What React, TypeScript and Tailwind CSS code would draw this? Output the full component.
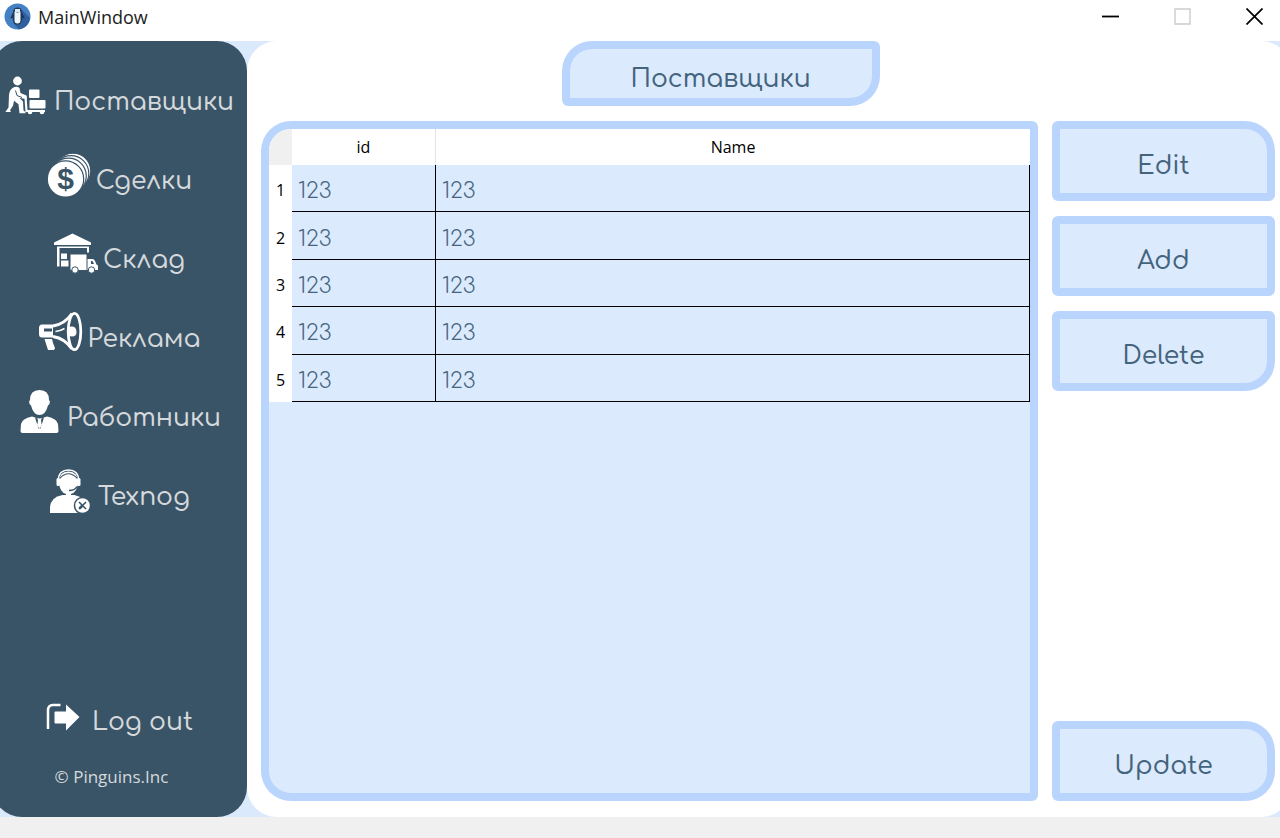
import type { ReactNode } from "react";

function PenguinLogo() {
  return (
    <svg className="size-[27px] shrink-0" viewBox="0 0 27 27" aria-hidden="true">
      <circle cx="13.500" cy="13.500" r="13" fill="#4480c4" />
      <path d="M17 6 L26 15 A13 13 0 0 1 15 26.4 L9 20 Z" fill="#2f5f9c" />
      <path d="M13.500 4.500c-3 0-4.400 2-4.400 4.500l-3 6.500 2.600-.6c0 4 1.500 6.600 4.800 6.600s4.800-2.600 4.800-6.600l2.600.6-3-6.500c0-2.500-1.400-4.500-4.400-4.500z" fill="#1d3a5c" />
      <path d="M10.500 8.500l3 1.500 3-1.500v9c0 2-1 3-3 3s-3-1-3-3z" fill="#eef6fb" />
      <path d="M11 6h5v3.500h-5z" fill="#dceaf2" />
    </svg>
  );
}

function Icon({ children }: { children: ReactNode }) {
  return (
    <svg className="h-11 w-11 shrink-0 text-white" viewBox="0 0 44 44" fill="currentColor" aria-hidden="true">
      {children}
    </svg>
  );
}

const DARK = "#3a5467";

function SupplierIcon() {
  return (
    <Icon>
      <g transform="translate(0 1)">
        <circle cx="12.500" cy="6" r="4.400" />
        <path d="M7.500 13q4-2.500 7 0l1 5 6 2.500v3.500l-7-1-1.500-1.500 5 5 .5 9 2 1.500v1.200h-6l-1-9-4.500-3.500-1 5-3 4.500 1 1.800H.5L0 37.500l3.500-5L4 20q.5-5 3.500-7z" />
        <path d="M10.500 15.500l1.500 5 5 2" fill="none" stroke={DARK} strokeWidth="1" />
        <path d="M17 22h3.500l1 14H40" fill="none" stroke="currentColor" strokeWidth="2.200" />
        <rect x="24" y="14.500" width="10.500" height="8.500" rx="1" />
        <rect x="24.500" y="25" width="16" height="8.500" rx="1" />
        <circle cx="25" cy="37" r="2.300" />
        <circle cx="37" cy="37" r="2.300" />
      </g>
    </Icon>
  );
}

function CoinsIcon() {
  return (
    <Icon>
      <g stroke={DARK} strokeWidth="1.200">
        <circle cx="26" cy="18" r="17.800" />
        <circle cx="24" cy="20.500" r="17.800" />
        <circle cx="21.500" cy="23" r="17.800" />
        <circle cx="18.500" cy="26" r="18.200" />
      </g>
      <text x="18.500" y="36" textAnchor="middle" fill={DARK} className="font-['Liberation_Sans'] text-[30px] font-bold">$</text>
    </Icon>
  );
}

function WarehouseIcon() {
  return (
    <Icon>
      <path d="M18.500 1.500L37 10.500v2.500H0v-2.500z" />
      <path d="M3 14.500h32v1.500H5.500v18.500H3zM33 16h2v4.500h-2z" />
      <path d="M7 21.500h6v5.500H7zM8 28.500h6.500v6H8zM7 28.500h2v6H7z" />
      <path d="M16.500 22.500H32.500v15.500H16.500z" />
      <path d="M33.500 27H38.500q1.500 0 2.500 2l1.500 3.500 1.500 1V38H33.500z" />
      <path d="M37 29h1.500l1.500 3h-3z" fill={DARK} />
      <circle cx="21" cy="38" r="3.200" stroke={DARK} />
      <circle cx="37.500" cy="38" r="3.200" stroke={DARK} />
    </Icon>
  );
}

function MegaphoneIcon() {
  return (
    <Icon>
      <path d="M3 13.500h11v13H3q-3 0-3-3.500v-6Q0 13.500 3 13.500z" />
      <path d="M5 17.500H13v3H5z" fill={DARK} />
      <path d="M14 15q12-2 19-12.500M14 25.500q12 2 19 12.500" fill="none" stroke="currentColor" strokeWidth="3" />
      <ellipse cx="35.500" cy="20.500" rx="6.300" ry="18.200" fill="none" stroke="currentColor" strokeWidth="2.800" />
      <path d="M29.500 16q7.500-2 8 4.500t-8 4.500z" />
      <path d="M16.500 20.500q5-.5 9-3" fill="none" stroke="currentColor" strokeWidth="1.500" />
      <path d="M5.500 28H13l1 4 2 5-1 2H9z" />
    </Icon>
  );
}

function WorkerIcon() {
  return (
    <Icon>
      <path d="M21.500 0q9.500 0 9.500 10 1.500 1 .5 4L30 15.500q-2.500 9.500-8.500 9.500T13 15.500L11.500 14q-1-3 .5-4 0-10 9.500-10z" />
      <path d="M14 26.500L18.500 28l3 .5 3-.5 4.500-1.500q10 2 11 7.500l.5 7q0 2-2 2H4.500q-2 0-2-2L3 34q1-5.500 11-7.500z" />
      <path d="M17 27.500l3.500 11h2l3.500-11-2.500 1-.5 2 .8 5-2.300 3-2.300-3 .8-5-.5-2z" fill={DARK} />
    </Icon>
  );
}

function SupportIcon() {
  return (
    <Icon>
      <path d="M19.500 2.500q9.500 0 9.500 10.500-.5 10-7 12v3h-5v-3q-6.500-2-7-12 0-10.500 9.500-10.500z" />
      <path d="M10.500 9.500Q19.500 0 28.500 9.500" fill="none" stroke={DARK} strokeWidth="1.200" />
      <path d="M9 11Q10 1 19.500 1T30 11" fill="none" stroke="currentColor" strokeWidth="1.500" />
      <rect x="7.500" y="9" width="3.500" height="8" rx="1.500" />
      <rect x="28" y="9" width="3.500" height="8" rx="1.500" />
      <path d="M28 17.500q-2 4-8 4" fill="none" stroke={DARK} strokeWidth="1.500" />
      <path d="M13.500 26h12q8 2 9.500 8v10H1V38q1-10 12.500-12z" />
      <circle cx="33.500" cy="36.500" r="8" stroke={DARK} strokeWidth="1.500" />
      <path d="M30 33l7 7M37 33l-7 7" stroke={DARK} strokeWidth="1.600" />
      <path d="M30.500 39.500l3-3" stroke={DARK} strokeWidth="2.500" />
    </Icon>
  );
}

function LogoutIcon() {
  return (
    <svg className="h-[30px] w-[34px] shrink-0 text-white" viewBox="0 0 34 30" fill="currentColor" aria-hidden="true">
      <path d="M14.500 2H7Q2 2 2 7.500V26" fill="none" stroke="currentColor" strokeWidth="2.500" />
      <path d="M9.500 8.500H20V1.500L33.500 14 20 27.500V20.500H9.500q-1 0-1-1v-10q0-1 1-1z" />
    </svg>
  );
}

const navItems = [
  { label: "Поставщики", icon: <SupplierIcon /> },
  { label: "Сделки", icon: <CoinsIcon /> },
  { label: "Склад", icon: <WarehouseIcon /> },
  { label: "Реклама", icon: <MegaphoneIcon /> },
  { label: "Работники", icon: <WorkerIcon /> },
  { label: "Техпод", icon: <SupportIcon /> },
];

const rows = [
  { id: "123", name: "123" },
  { id: "123", name: "123" },
  { id: "123", name: "123" },
  { id: "123", name: "123" },
  { id: "123", name: "123" },
];

function ActionButton({ label, corners }: { label: string; corners: string }) {
  return (
    <button
      type="button"
      className={`h-20 w-full border-8 border-[#bad5fd] bg-[#dbeafd] pt-[10px] text-[25px] leading-8 font-medium text-[#44637c] ${corners}`}
    >
      {label}
    </button>
  );
}

export default function App() {
  return (
    <div className="flex min-h-screen flex-col overflow-hidden bg-[#f0f0f0] font-['Comfortaa','Inter',sans-serif]">
      <header className="flex h-[41px] items-center bg-white pb-2 pl-1 font-['Open_Sans',sans-serif]">
        <PenguinLogo />
        <h1 className="ml-[7px] flex-1 text-lg text-[#1c1c1c]">MainWindow</h1>
        <div className="flex text-black">
          <button type="button" aria-label="Minimize" className="flex w-[72px] justify-center">
            <svg className="size-[17px]" viewBox="0 0 17 17"><path d="M0 8.500h17" stroke="currentColor" strokeWidth="1.800" /></svg>
          </button>
          <button type="button" aria-label="Maximize" className="flex w-[72px] justify-center">
            <svg className="size-[17px]" viewBox="0 0 17 17"><path d="M1 1h15v15H1z" fill="none" stroke="#cccccc" strokeWidth="1.400" /></svg>
          </button>
          <button type="button" aria-label="Close" className="mr-[-10px] flex w-[72px] justify-center">
            <svg className="size-[17px]" viewBox="0 0 17 17"><path d="M.5.5l16 16M16.500.5l-16 16" stroke="currentColor" strokeWidth="1.700" /></svg>
          </button>
        </div>
      </header>

      <div className="mb-[21px] flex flex-1 bg-[#dbe9fc]">
        <aside className="-ml-2 flex w-[255px] shrink-0 flex-col rounded-[30px] bg-[#3a5467] pt-[21px] pr-2 pl-2 text-[#d5d9dc]">
          <nav className="flex flex-col">
            {navItems.map((item) => (
              <button key={item.label} type="button" className="flex h-[79px] items-center justify-center gap-[5px] text-[25px] leading-8 font-medium whitespace-nowrap">
                <span className="pb-3">{item.icon}</span>
                <span className="pt-px">{item.label}</span>
              </button>
            ))}
          </nav>
          <button type="button" className="mt-auto flex items-center justify-center gap-3 text-[25px] leading-8 font-medium">
            <span className="pb-2"><LogoutIcon /></span>
            Log out
          </button>
          <p className="mt-6 mb-[28px] pr-4 text-center font-['Open_Sans',sans-serif] text-[17px] leading-6">© Pinguins.Inc</p>
        </aside>

        <main className="-mr-[11px] flex min-w-0 flex-1 flex-col rounded-[30px] bg-white pr-4 pb-4 pl-[14px]">
          <div className="flex">
            <div className="flex-[19]" />
            <h2 className="flex h-[65px] w-[318px] items-center justify-center rounded-tl-[30px] rounded-tr-[6px] rounded-br-[30px] rounded-bl-[6px] border-8 border-[#bad5fd] bg-[#dbeafd] pt-[10px] text-[25px] leading-8 font-medium text-[#44637c]">
              Поставщики
            </h2>
            <div className="flex-[25]" />
          </div>

          <div className="mt-[15px] flex flex-1 gap-[14px]">
            <section className="min-w-0 flex-1 overflow-hidden rounded-l-[30px] rounded-r-[6px] border-8 border-[#bad5fd] bg-[#dbeafd]">
              <table className="h-[273px] w-full table-fixed border-separate border-spacing-0 text-left">
                <thead className="font-['Open_Sans',sans-serif] text-base text-black">
                  <tr className="h-9 bg-white">
                    <td className="w-[23px] bg-[#f0f0f0]" />
                    <th scope="col" className="w-[144px] border-r border-[#e4e4e4] text-center font-normal">id</th>
                    <th scope="col" className="text-center font-normal">Name</th>
                  </tr>
                </thead>
                <tbody>
                  {rows.map((row, index) => (
                    <tr key={index}>
                      <th scope="row" className="bg-white pt-[3px] text-center font-['Open_Sans',sans-serif] text-base font-normal text-black">{index + 1}</th>
                      <td className="border-r border-b border-black pt-[6px] pl-[6px] text-[22px] leading-6 font-light text-[#44637c]">{row.id}</td>
                      <td className="border-r border-b border-black pt-[6px] pl-[6px] text-[22px] leading-6 font-light text-[#44637c]">{row.name}</td>
                    </tr>
                  ))}
                </tbody>
              </table>
            </section>

            <div className="flex w-[223px] shrink-0 flex-col gap-[15px]">
              <ActionButton label="Edit" corners="rounded-[6px] rounded-tr-[30px]" />
              <ActionButton label="Add" corners="rounded-[6px]" />
              <ActionButton label="Delete" corners="rounded-[6px] rounded-br-[30px]" />
              <div className="mt-auto">
                <ActionButton label="Update" corners="rounded-l-[6px] rounded-r-[30px]" />
              </div>
            </div>
          </div>
        </main>
      </div>
    </div>
  );
}
